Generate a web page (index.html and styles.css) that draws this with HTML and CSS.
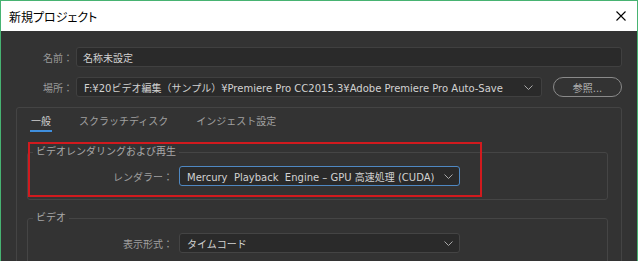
FILE: index.html
```html
<!DOCTYPE html>
<html lang="ja">
<head>
<meta charset="utf-8">
<title>新規プロジェクト</title>
<link rel="stylesheet" href="styles.css">
</head>
<body>
<div class="window">
  <div class="titlebar">
    <span class="title">新規プロジェクト</span>
    <svg class="close" width="10" height="10" viewBox="0 0 10 10"><path d="M0.5 0.5L9.5 9.5M9.5 0.5L0.5 9.5" stroke="#000" stroke-width="1.1" fill="none"/></svg>
  </div>
  <div class="content">
    <div class="row">
      <span class="lbl">名前：</span>
      <div class="input grow">名称未設定</div>
    </div>
    <div class="row">
      <span class="lbl">場所：</span>
      <div class="input grow">
        <span class="val">F:¥20ビデオ編集（サンプル）¥Premiere Pro CC2015.3¥Adobe Premiere Pro Auto-Save</span>
        <svg class="chev" width="9" height="5" viewBox="0 0 9 5"><path d="M0.5 0.5L4.5 4.5L8.5 0.5" stroke="#a8a8a8" stroke-width="1" fill="none"/></svg>
      </div>
      <button class="btn">参照...</button>
    </div>
    <div class="panel">
      <div class="tabs">
        <span class="tab active">一般</span>
        <span class="tab">スクラッチディスク</span>
        <span class="tab">インジェスト設定</span>
      </div>
      <fieldset class="group first">
        <legend>ビデオレンダリングおよび再生</legend>
        <div class="frow">
          <span class="flbl">レンダラー：</span>
          <div class="select focus">
            <span class="val">Mercury&nbsp; Playback&nbsp; Engine – GPU 高速処理 (CUDA)</span>
            <svg class="chev" width="9" height="5" viewBox="0 0 9 5"><path d="M0.5 0.5L4.5 4.5L8.5 0.5" stroke="#a8a8a8" stroke-width="1" fill="none"/></svg>
          </div>
        </div>
      </fieldset>
      <fieldset class="group second">
        <legend>ビデオ</legend>
        <div class="frow">
          <span class="flbl">表示形式：</span>
          <div class="select">
            <span class="val">タイムコード</span>
            <svg class="chev" width="9" height="5" viewBox="0 0 9 5"><path d="M0.5 0.5L4.5 4.5L8.5 0.5" stroke="#a8a8a8" stroke-width="1" fill="none"/></svg>
          </div>
        </div>
      </fieldset>
      <div class="highlight"></div>
    </div>
  </div>
</div>
</body>
</html>
```

FILE: styles.css
```css
* { box-sizing: border-box; }
html, body {
  margin: 0;
  padding: 0;
  width: 638px;
  height: 261px;
  overflow: hidden;
  background: #333333;
}
body {
  font-family: "DejaVu Sans", "Noto Sans CJK JP", sans-serif;
  font-size: 10px;
}
.window {
  width: 638px;
  height: 261px;
  border: 1px solid #47b372;
  border-bottom: none;
  display: flex;
  flex-direction: column;
  overflow: hidden;
}
.titlebar {
  height: 30px;
  flex: none;
  background: #ffffff;
  display: flex;
  align-items: center;
  justify-content: space-between;
  padding: 0 11px 0 8px;
}
.title {
  font-family: "Noto Sans CJK JP", sans-serif;
  font-size: 12px;
  color: #000;
  font-feature-settings: "palt";
}
.close { display: block; }
.content {
  flex: 1;
  background: #333333;
  padding: 16px 15px 0 15px;
}
.row {
  display: flex;
  align-items: center;
  height: 20px;
  margin-bottom: 10px;
}
.lbl {
  width: 60px;
  text-align: right;
  padding-right: 3px;
  color: #9a9a9a;
  flex: none;
}
.input {
  height: 20px;
  background: #2a2a2a;
  border: 1px solid #404040;
  border-radius: 3px;
  color: #d2d2d2;
  padding: 0 7px 0 6px;
  display: flex;
  align-items: center;
  justify-content: space-between;
  white-space: nowrap;
  overflow: hidden;
}
.grow { flex: 1; }
.row .input .val { padding-left: 1px; }
.row .chev { margin-right: 1px; }
.btn {
  width: 69px;
  height: 20px;
  margin-left: 11px;
  border: 1px solid #8a8a8a;
  border-radius: 10px;
  background: transparent;
  color: #b0b0b0;
  font-family: inherit;
  font-size: 10px;
  padding: 0;
  flex: none;
}
.panel {
  position: relative;
  border: 1px solid #444444;
  border-radius: 3px;
  height: 200px;
}
.tabs {
  display: flex;
  padding: 7px 0 0 13px;
}
.tab {
  line-height: 14px;
  padding: 0 1px 1px;
  border-bottom: 2px solid transparent;
  margin-right: 26px;
  color: #a0a0a0;
}
.tab.active {
  color: #d0d0d0;
  border-bottom-color: #3f8fde;
}
.group {
  margin: 13px 13px 0 10px;
  padding: 7px 0 13px 0;
  border: 1px solid #454545;
  border-radius: 3px;
  min-width: 0;
}
.group.second {
  margin-top: 11px;
  padding-top: 8px;
}
.group legend {
  line-height: 14px;
  padding: 0 3px;
  margin-left: 5px;
  color: #a8a8a8;
}
.frow {
  display: flex;
  align-items: center;
}
.flbl {
  width: 146px;
  padding-right: 1px;
  text-align: right;
  color: #a0a0a0;
  flex: none;
}
.select {
  width: 281px;
  height: 20px;
  margin-left: 5px;
  background: #2a2a2a;
  border: 1px solid #444444;
  border-radius: 3px;
  color: #d2d2d2;
  padding: 0 6px 0 7px;
  display: flex;
  align-items: center;
  justify-content: space-between;
  white-space: nowrap;
}
.select.focus {
  border-color: #4f88c2;
}
.highlight {
  position: absolute;
  left: 11px;
  top: 34px;
  width: 454px;
  height: 55px;
  border: 2px solid #d11a1e;
  pointer-events: none;
}
```
